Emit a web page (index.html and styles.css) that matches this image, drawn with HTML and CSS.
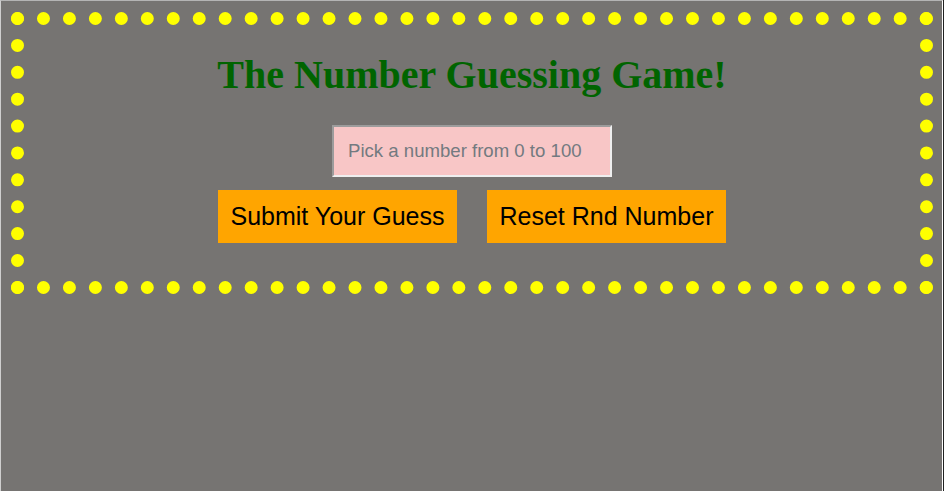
FILE: index.html
```html
<!DOCTYPE html>
<html>
<head>
<meta charset="utf-8">
<title>The Number Guessing Game</title>
<link rel="stylesheet" href="styles.css">
</head>
<body>
<div class="frame">
  <div class="game">
    <h1 class="title">The Number Guessing Game!</h1>
    <input class="guess" type="text" placeholder="Pick a number from 0 to 100">
    <div class="actions">
      <button class="btn">Submit Your Guess</button>
      <button class="btn">Reset Rnd Number</button>
    </div>
  </div>
</div>
</body>
</html>
```

FILE: styles.css
```css
html {
  background: #222222;
  height: 100%;
}
body {
  margin: 0;
  height: 100%;
  overflow: hidden;
}
.frame {
  box-sizing: border-box;
  width: 943px;
  height: 491px;
  background: #767472;
  border-top: 1px solid #b4b4b4;
  border-left: 1px solid #cfcfcf;
  border-right: 1px solid #ffffff;
  padding: 11px 8px 0 10px;
}
.game {
  box-sizing: border-box;
  width: 922px;
  height: 282px;
  border: 13px dotted #ffff00;
  padding-top: 27px;
  display: flex;
  flex-direction: column;
  align-items: center;
}
.title {
  margin: 0;
  font-family: "Liberation Serif", "Times New Roman", serif;
  font-weight: bold;
  font-size: 40px;
  line-height: 46px;
  color: #006400;
}
.guess {
  box-sizing: border-box;
  margin-top: 27px;
  width: 280px;
  height: 52px;
  border-style: solid;
  border-width: 2px;
  border-color: #9c9c9c #efefef #efefef #9c9c9c;
  background: #f8c6c6;
  padding: 0 14px;
  font-family: "Liberation Sans", Arial, sans-serif;
  font-size: 18.6px;
  color: #333;
  outline: none;
}
.guess::placeholder {
  color: #737a80;
}
.actions {
  margin-top: 13px;
  display: flex;
  gap: 30px;
}
.btn {
  box-sizing: border-box;
  width: 239px;
  height: 53px;
  border: none;
  background: #ffa500;
  color: #000;
  font-family: "Liberation Sans", Arial, sans-serif;
  font-size: 25px;
  padding: 0;
}
```
